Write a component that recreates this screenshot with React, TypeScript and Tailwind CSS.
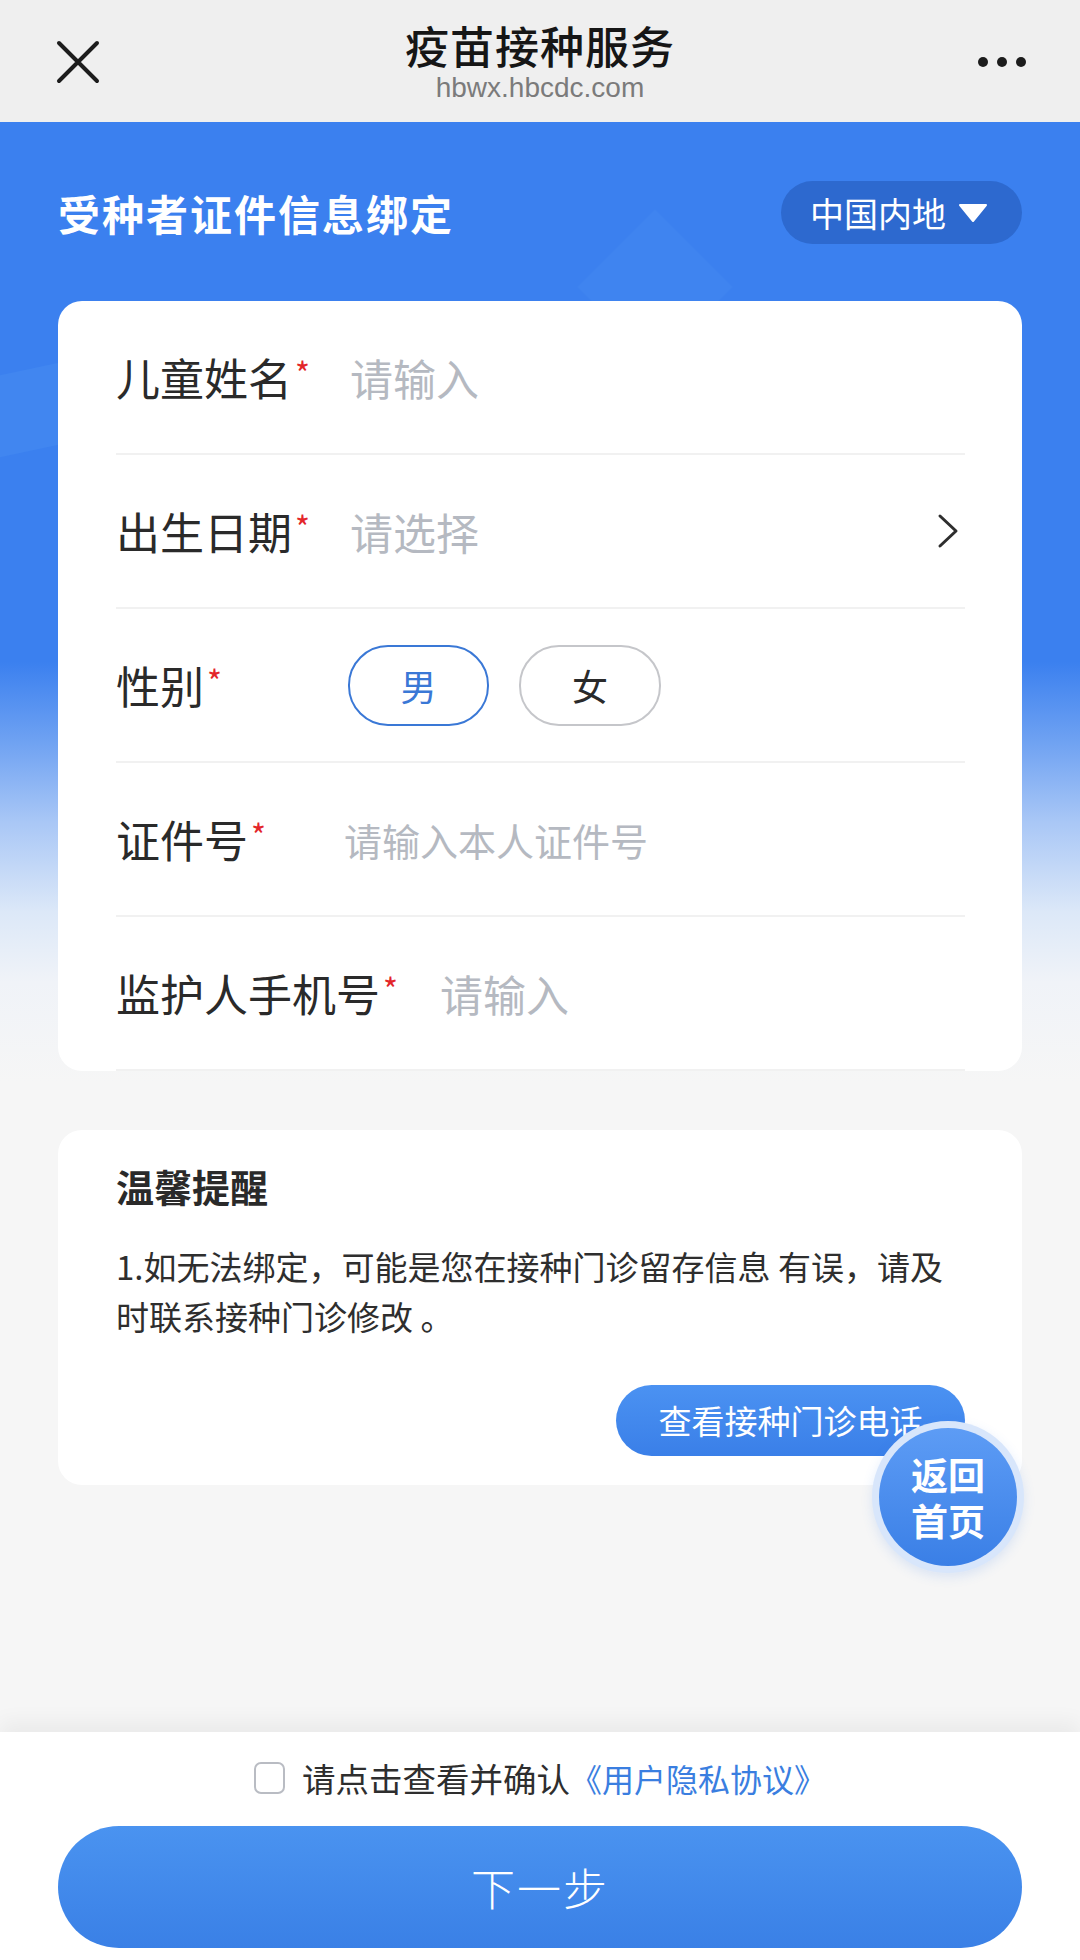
import React from "react";

const FONT = { fontFamily: '"Noto Sans CJK SC", "Noto Sans", sans-serif' };

function Star() {
  return <span className="text-[32px] text-[#e3262a] leading-none self-start mt-[4px] ml-[3px]">*</span>;
}

function Row({ label, children }: { label: string; children?: React.ReactNode }) {
  return (
    <div className="h-[154px] flex items-center border-b-2 border-[#f1f1f1]">
      <div className="min-w-[192px] flex items-center mr-[40px]">
        <span className="text-[44px] text-[#2a2a2a] leading-[50px]">{label}</span>
        <Star />
      </div>
      {children}
    </div>
  );
}

export default function App() {
  return (
    <div className="w-[1080px] h-[1960px] relative overflow-hidden bg-[#f6f6f6]" style={FONT}>
      {/* Nav bar */}
      <div className="h-[122px] bg-[#efefef] relative flex flex-col items-center">
        <svg className="absolute left-[56px] top-[40px]" width="44" height="44" viewBox="0 0 44 44">
          <path d="M3 3 L41 41 M41 3 L3 41" stroke="#1c1c1c" strokeWidth="4" strokeLinecap="round" />
        </svg>
        <div className="absolute left-[978px] top-[57px] flex gap-[9px]">
          <div className="w-[10px] h-[10px] rounded-full bg-[#1c1c1c]" />
          <div className="w-[10px] h-[10px] rounded-full bg-[#1c1c1c]" />
          <div className="w-[10px] h-[10px] rounded-full bg-[#1c1c1c]" />
        </div>
        <div className="mt-[20px] text-[44px] leading-[50px] font-medium text-[#161616] tracking-[1px]">疫苗接种服务</div>
        <div className="mt-[3px] text-[28px] leading-[30px] text-[#7b7b7b]" style={{ fontFamily: '"Liberation Sans", Arial, sans-serif' }}>
          hbwx.hbcdc.com
        </div>
      </div>

      {/* Main area */}
      <div className="relative bg-[linear-gradient(180deg,#3b80ef_0px,#3b80ef_540px,#6fa2f2_620px,#a9c7f6_700px,#dce8f8_790px,#f0f3f8_860px,#f6f6f6_960px)] pb-[60px]">
        {/* decorative shapes */}
        <div className="absolute left-[600px] top-[110px] w-[110px] h-[110px] rotate-45 bg-[#3f84f0]" />
        <div className="absolute left-[-80px] top-[250px] w-[200px] h-[80px] -rotate-12 bg-[#4186f0]" />

        <div className="relative flex items-center justify-between px-[58px] pt-[59px]">
          <div className="text-[42px] font-bold text-white leading-[63px] tracking-[2px]">受种者证件信息绑定</div>
          <div className="h-[63px] w-[241px] rounded-full bg-[#2d69cf] flex items-center pl-[29px]">
            <span className="text-[34px] text-white leading-none">中国内地</span>
            <svg className="ml-[12px]" width="30" height="20" viewBox="0 0 30 20">
              <path d="M2 2 L28 2 L15 18 Z" fill="#ffffff" stroke="#ffffff" strokeWidth="2" strokeLinejoin="round" />
            </svg>
          </div>
        </div>

        {/* Form card */}
        <div className="relative mx-[58px] mt-[57px] bg-white rounded-[24px] pl-[58px] pr-[57px]">
          <Row label="儿童姓名">
            <span className="text-[43px] text-[#b5b9c1]">请输入</span>
          </Row>
          <Row label="出生日期">
            <span className="text-[43px] text-[#b5b9c1] flex-1">请选择</span>
            <svg className="mr-[6px]" width="22" height="36" viewBox="0 0 22 36">
              <path d="M3 3 L19 18 L3 33" stroke="#2e2e2e" strokeWidth="3" fill="none" strokeLinecap="round" strokeLinejoin="round" />
            </svg>
          </Row>
          <Row label="性别">
            <div className="flex gap-[30px]">
              <div className="w-[141px] h-[81px] rounded-[40px] border-[2.5px] border-[#3a78d6] flex items-center justify-center text-[36px] text-[#3a78d6]">男</div>
              <div className="w-[142px] h-[81px] rounded-[40px] border-[2.5px] border-[#c5c6ca] flex items-center justify-center text-[36px] text-[#2a2a2a]">女</div>
            </div>
          </Row>
          <Row label="证件号">
            <span className="text-[38px] text-[#b5b9c1] -ml-[4px]">请输入本人证件号</span>
          </Row>
          <Row label="监护人手机号">
            <span className="text-[43px] text-[#b5b9c1] ml-[2px]">请输入</span>
          </Row>
        </div>

        {/* Reminder card */}
        <div className="relative mx-[58px] mt-[59px] bg-white rounded-[24px] pl-[58px] pr-[57px] pt-[34px] pb-[29px]">
          <div className="text-[38px] font-bold text-[#2a2a2a] leading-[44px]">温馨提醒</div>
          <div className="mt-[33px] text-[33px] text-[#2e2e2e] leading-[50px]">
            1.如无法绑定，可能是您在接种门诊留存信息 有误，请及时联系接种门诊修改 。
          </div>
          <div className="flex justify-end mt-[44px]">
            <div className="w-[349px] h-[71px] rounded-full bg-[linear-gradient(180deg,#4b92f2,#3a7fe8)] flex items-center justify-center text-[33px] text-white">
              查看接种门诊电话
            </div>
          </div>
        </div>
      </div>

      {/* Floating home button */}
      <div className="absolute left-[872px] top-[1421px] w-[152px] h-[152px] rounded-full bg-[#d8e6fb] p-[7px] shadow-[0_4px_12px_rgba(58,127,232,0.15)]">
        <div className="w-full h-full rounded-full bg-[linear-gradient(180deg,#5d9cf5,#3a7fe6)] flex flex-col items-center justify-center text-white font-bold text-[37px] leading-[46px]">
          <span>返回</span>
          <span>首页</span>
        </div>
      </div>

      {/* Bottom bar */}
      <div className="absolute left-0 bottom-0 w-[1080px] h-[228px] bg-white shadow-[0_-10px_20px_rgba(0,0,0,0.05)]">
        <div className="h-[94px] flex items-center justify-center pb-[2px]">
          <div className="w-[31px] h-[32px] rounded-[7px] border-2 border-[#b9bcc3] mr-[17px]" />
          <span className="text-[33.5px] text-[#2e2e2e]">请点击查看并确认</span>
          <span className="text-[32px] text-[#3a7ee0]">《用户隐私协议》</span>
        </div>
        <div className="mx-[58px] h-[122px] rounded-full bg-[linear-gradient(180deg,#4a93f0,#3a80e6)] flex items-center justify-center text-[44px] text-white font-light tracking-[2px]">
          下一步
        </div>
      </div>
    </div>
  );
}
